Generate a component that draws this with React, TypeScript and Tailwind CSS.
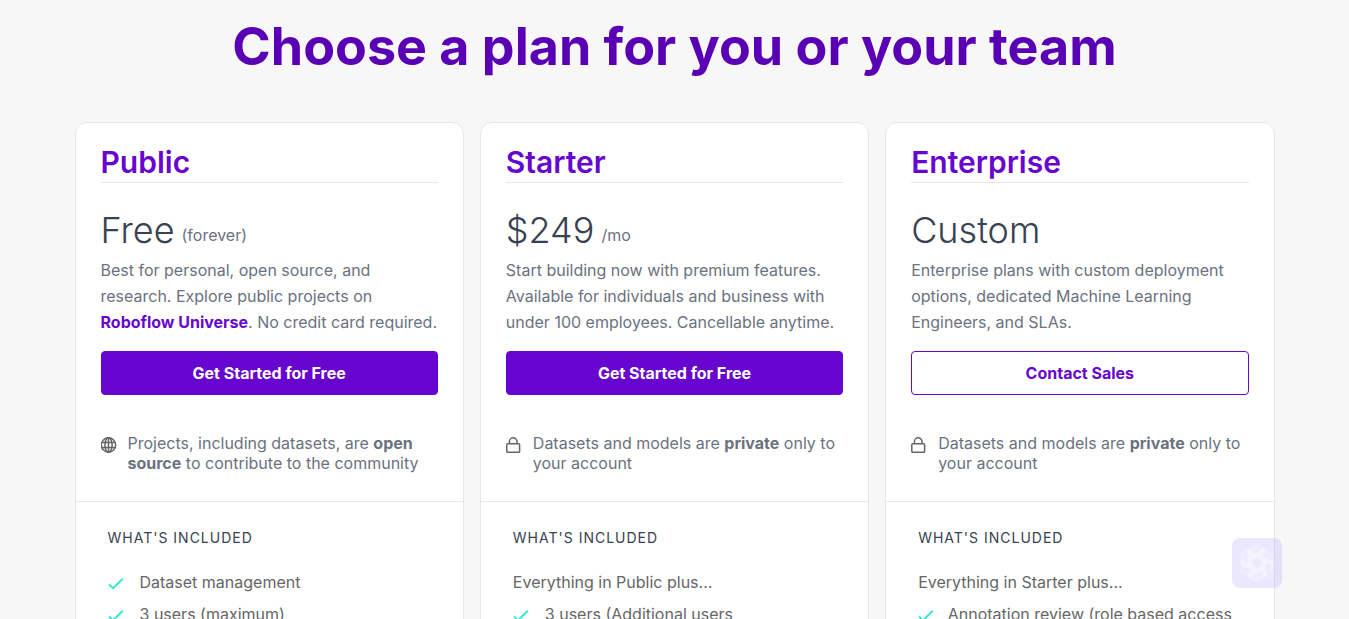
import type { ReactNode } from 'react';

interface Plan {
  id: string;
  name: string;
  price: string;
  priceNote?: string;
  description: ReactNode;
  cta: string;
  ctaStyle: 'solid' | 'outline';
  visibility: ReactNode;
  icon: 'globe' | 'lock';
  intro?: string;
  features: string[];
}

const plans: Plan[] = [
  {
    id: 'public',
    name: 'Public',
    price: 'Free',
    priceNote: '(forever)',
    description: (
      <>
        Best for personal, open source, and research. Explore public projects on{' '}
        <a href="#universe" className="font-bold text-[#6706ce]">Roboflow Universe</a>. No credit card required.
      </>
    ),
    cta: 'Get Started for Free',
    ctaStyle: 'solid',
    visibility: (
      <>
        Projects, including datasets, are <strong>open source</strong> to contribute to the community
      </>
    ),
    icon: 'globe',
    features: ['Dataset management', '3 users (maximum)'],
  },
  {
    id: 'starter',
    name: 'Starter',
    price: '$249',
    priceNote: '/mo',
    description:
      'Start building now with premium features. Available for individuals and business with under 100 employees. Cancellable anytime.',
    cta: 'Get Started for Free',
    ctaStyle: 'solid',
    visibility: (
      <>
        Datasets and models are <strong>private</strong> only to your account
      </>
    ),
    icon: 'lock',
    intro: 'Everything in Public plus...',
    features: ['3 users (Additional users'],
  },
  {
    id: 'enterprise',
    name: 'Enterprise',
    price: 'Custom',
    description: 'Enterprise plans with custom deployment options, dedicated Machine Learning Engineers, and SLAs.',
    cta: 'Contact Sales',
    ctaStyle: 'outline',
    visibility: (
      <>
        Datasets and models are <strong>private</strong> only to your account
      </>
    ),
    icon: 'lock',
    intro: 'Everything in Starter plus...',
    features: ['Annotation review (role based access control)'],
  },
];

const GlobeIcon = () => (
  <svg viewBox="0 0 16 16" className="mt-1 size-4 shrink-0" fill="none" stroke="#666" strokeWidth="1.5" aria-hidden="true">
    <circle cx="7.5" cy="8" r="7.2" />
    <ellipse cx="7.5" cy="8" rx="3.6" ry="7.2" />
    <path d="M7.5.8v14.4M.8 5.5h13.4M.8 10.5h13.4" />
  </svg>
);

const LockIcon = () => (
  <svg viewBox="0 0 16 16" className="mt-1 size-4 shrink-0" fill="none" stroke="#666" strokeWidth="1.5" aria-hidden="true">
    <rect x=".8" y="6.7" width="12.8" height="8.6" rx="1" />
    <path d="M3.4 6.7V4.6a3.8 3.8 0 0 1 7.6 0v2.1" />
  </svg>
);

const CheckIcon = () => (
  <svg viewBox="0 0 16 16" className="mt-1 size-4" fill="none" stroke="#34e8cf" strokeWidth="2" aria-hidden="true">
    <path d="M1 10.6 5.2 14.2 14.8 4.8" />
  </svg>
);

const PlanCard = ({ plan }: { plan: Plan }) => {
  return (
    <section className="rounded-t-xl border border-[#e5e7eb] bg-white">
      <div className="px-[25px] pt-6 pb-7">
        <h2 className="border-b border-[#e5e7eb] pb-[5px] text-3xl leading-[30px] font-semibold text-[#6706ce]">
          {plan.name}
        </h2>
        <p className="mt-6 flex items-end gap-[7px] text-[#374151]">
          <span className="text-4xl leading-[46px] font-[350]">{plan.price}</span>
          {plan.priceNote && <span className="leading-9 text-[#6b7280]">{plan.priceNote}</span>}
        </p>
        <p className="mt-1 min-h-[78px] leading-[26px] text-[#6b7280]">{plan.description}</p>
        <button
          type="button"
          className={`mt-4 h-11 w-full rounded border border-[#6706ce] font-bold ${
            plan.ctaStyle === 'solid' ? 'bg-[#6706ce] text-white' : 'bg-white text-[#6706ce]'
          }`}
        >
          {plan.cta}
        </button>
        <div className="mt-[38px] flex gap-[11px] leading-5 text-[#6b7280]">
          {plan.icon === 'globe' ? <GlobeIcon /> : <LockIcon />}
          <p>{plan.visibility}</p>
        </div>
      </div>

      <div className="border-t border-[#e5e7eb] px-8 py-6">
        <h3 className="text-sm leading-6 tracking-[1px] text-[#374151] uppercase">What's included</h3>
        <div className="mt-5 flex flex-col gap-2 leading-6 text-[#666]">
          {plan.intro && <p>{plan.intro}</p>}
          <ul className="flex flex-col gap-2">
            {plan.features.map((feature) => (
              <li key={feature} className="flex">
                <div className="mr-4 flex w-4 min-w-0">
                  <div className="shrink-0">
                    <CheckIcon />
                  </div>
                </div>
                <span>{feature}</span>
              </li>
            ))}
          </ul>
        </div>
      </div>
    </section>
  );
};

const ChatBadge = () => (
  <button
    type="button"
    aria-label="Open assistant"
    className="fixed right-[67px] bottom-[31px] flex size-[50px] items-center justify-center rounded-lg bg-[#7c5cf5]/15"
  >
    <svg viewBox="-20 -20 40 40" className="size-10" fill="none" stroke="#fff" aria-hidden="true">
      <circle r="16" fill="#fff" fillOpacity=".12" stroke="none" />
      {[0, 60, 120, 180, 240, 300].map((angle) => (
        <g key={angle} transform={`rotate(${angle})`}>
          <path d="M-14-4v-6l10-6 7-2" strokeWidth="4" strokeOpacity=".12" />
          <path d="M-5-5 8-13" strokeWidth="5" strokeOpacity=".4" />
        </g>
      ))}
    </svg>
  </button>
);

export default function App() {
  return (
    <div className="h-screen overflow-hidden bg-[#f7f7f7] font-['Inter',sans-serif]">
      <main className="mx-auto max-w-[1200px] pt-4">
        <h1 className="text-center text-[52px] leading-[62px] font-bold text-[#5a00b4]">
          Choose a plan for you or your team
        </h1>
        <div className="mt-11 grid grid-cols-3 gap-4">
          {plans.map((plan) => (
            <PlanCard key={plan.id} plan={plan} />
          ))}
        </div>
      </main>
      <ChatBadge />
    </div>
  );
}
